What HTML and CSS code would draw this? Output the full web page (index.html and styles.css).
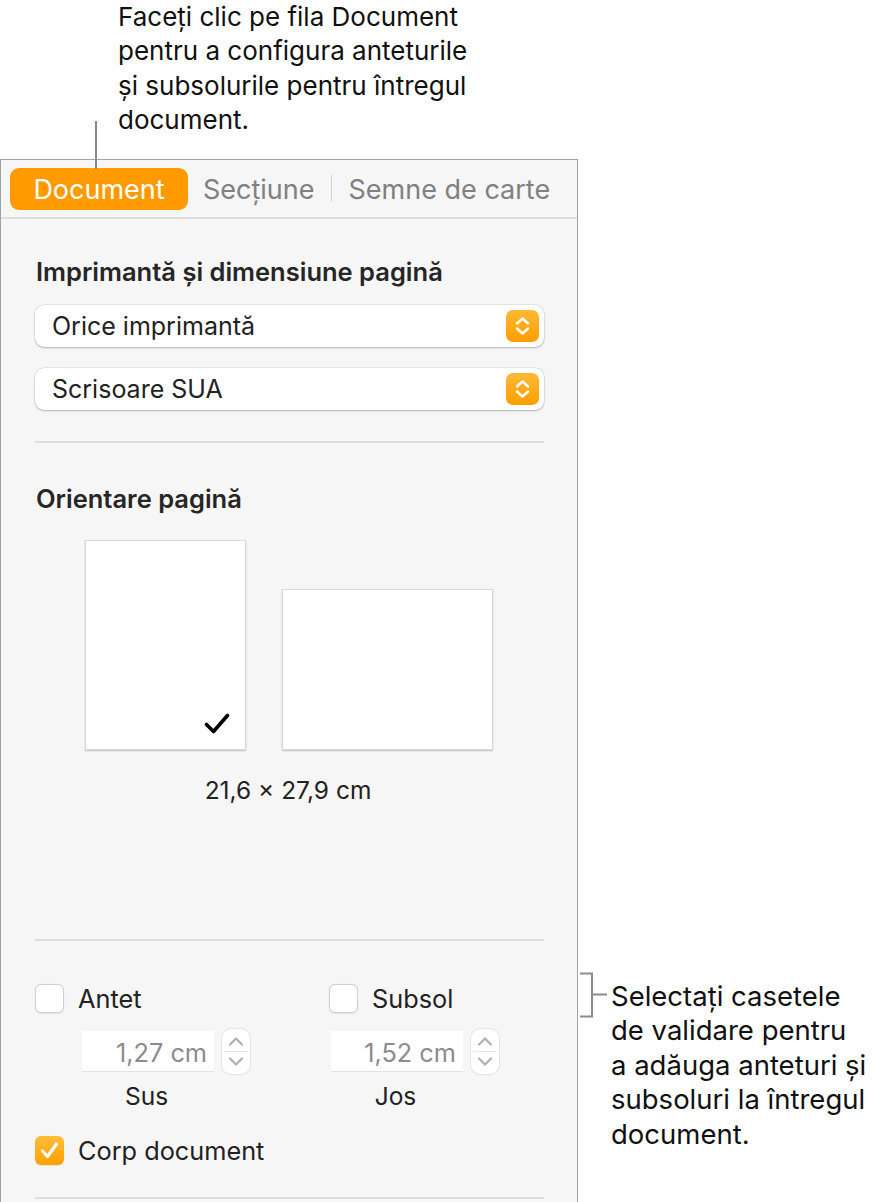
FILE: index.html
```html
<!DOCTYPE html>
<html lang="ro">
<head>
<meta charset="utf-8">
<title>Document</title>
<link rel="stylesheet" href="styles.css">
</head>
<body>
<div class="page">
  <div class="main-col">
    <div class="top-note">
      <p class="note-text">Faceți clic pe fila Document<br>pentru a configura anteturile<br>și subsolurile pentru întregul<br>document.</p>
      <span class="leader"></span>
    </div>
    <div class="inspector">
      <div class="tabs">
        <div class="tab active">Document</div>
        <div class="tab tab-sec">Secțiune</div>
        <span class="tab-sep"></span>
        <div class="tab">Semne de carte</div>
      </div>
      <div class="content">
        <h2 class="heading h-first">Imprimantă și dimensiune pagină</h2>
        <div class="popup">
          <span class="popup-label">Orice imprimantă</span>
          <span class="popup-arrows"><svg width="33" height="32" viewBox="0 0 33 32"><path d="M11 13.5 L16.5 8.5 L22 13.5 M11 18.5 L16.5 23.5 L22 18.5" fill="none" stroke="#fff" stroke-width="2.4" stroke-linecap="round" stroke-linejoin="round"/></svg></span>
        </div>
        <div class="popup popup-second">
          <span class="popup-label">Scrisoare SUA</span>
          <span class="popup-arrows"><svg width="33" height="32" viewBox="0 0 33 32"><path d="M11 13.5 L16.5 8.5 L22 13.5 M11 18.5 L16.5 23.5 L22 18.5" fill="none" stroke="#fff" stroke-width="2.4" stroke-linecap="round" stroke-linejoin="round"/></svg></span>
        </div>
        <div class="sep sep-1"></div>
        <h2 class="heading h-second">Orientare pagină</h2>
        <div class="orient">
          <div class="sheet portrait">
            <svg class="tick" width="26" height="22" viewBox="0 0 26 22"><path d="M2.5 11.5 L9.5 18.5 L23.5 2.5" fill="none" stroke="#000" stroke-width="3.6" stroke-linecap="round" stroke-linejoin="round"/></svg>
          </div>
          <div class="sheet landscape"></div>
        </div>
        <div class="dims">21,6 × 27,9 cm</div>
        <div class="sep sep-2"></div>
        <div class="hf">
          <div class="hf-col hf-left">
            <div class="check"><span class="box"></span><span class="check-label">Antet</span></div>
            <div class="field-row">
              <div class="field">1,27 cm</div>
              <div class="stepper"><svg width="28" height="45" viewBox="0 0 28 45"><path d="M8 15.5 L14 9.5 L20 15.5 M8 29.5 L14 35.5 L20 29.5" fill="none" stroke="#b0b0b0" stroke-width="2.2" stroke-linecap="round" stroke-linejoin="round"/><path d="M2 22.5 H26" stroke="#e6e6e6" stroke-width="1"/></svg></div>
            </div>
            <div class="field-label">Sus</div>
          </div>
          <div class="hf-col hf-right">
            <div class="check"><span class="box"></span><span class="check-label">Subsol</span></div>
            <div class="field-row">
              <div class="field">1,52 cm</div>
              <div class="stepper"><svg width="28" height="45" viewBox="0 0 28 45"><path d="M8 15.5 L14 9.5 L20 15.5 M8 29.5 L14 35.5 L20 29.5" fill="none" stroke="#b0b0b0" stroke-width="2.2" stroke-linecap="round" stroke-linejoin="round"/><path d="M2 22.5 H26" stroke="#e6e6e6" stroke-width="1"/></svg></div>
            </div>
            <div class="field-label">Jos</div>
          </div>
        </div>
        <div class="check check-body"><span class="box checked"><svg width="29" height="29" viewBox="0 0 29 29"><path d="M7.5 15 L12.5 20.5 L21.5 8" fill="none" stroke="#fff" stroke-width="3.2" stroke-linecap="round" stroke-linejoin="round"/></svg></span><span class="check-label">Corp document</span></div>
        <div class="sep sep-3"></div>
      </div>
    </div>
  </div>
  <div class="side-col">
    <div class="side-note">
      <svg class="bracket" width="30" height="46" viewBox="0 0 30 46"><path d="M1 1.5 H13 V44.5 H1 M13 22.5 H28" fill="none" stroke="#8c8c8c" stroke-width="2"/></svg>
      <p class="side-text">Selectați casetele<br>de validare pentru<br>a adăuga anteturi și<br>subsoluri la întregul<br>document.</p>
    </div>
  </div>
</div>
</body>
</html>
```

FILE: styles.css
```css
* { box-sizing: border-box; }
html, body { margin: 0; padding: 0; background: #fff; }
body {
  width: 884px;
  height: 1202px;
  overflow: hidden;
  font-family: "Inter", "Liberation Sans", sans-serif;
  color: #222;
}
.page { display: flex; align-items: flex-start; }
.main-col { width: 578px; flex: none; position: relative; }

.top-note { height: 159px; position: relative; }
.note-text {
  margin: 0;
  padding: 0 0 0 118px;
  font-size: 26px;
  line-height: 34.3px;
  color: #111;
  white-space: nowrap;
}
.leader {
  position: absolute;
  left: 95px;
  top: 121px;
  width: 2px;
  height: 48px;
  background: #8a8a8a;
  z-index: 2;
}

.inspector {
  width: 578px;
  height: 1100px;
  background: #f6f6f6;
  border: 1px solid #a3a3a3;
  border-bottom: none;
}
.tabs {
  height: 59px;
  border-bottom: 2px solid #dedede;
  display: flex;
  align-items: center;
  padding: 0 0 0 9px;
}
.tab {
  font-size: 27px;
  color: #808080;
  height: 42px;
  line-height: 44px;
  white-space: nowrap;
}
.tab.active {
  background: #ff9a00;
  color: #fff;
  border-radius: 9px;
  width: 178px;
  text-align: center;
}
.tab-sec { margin-left: 15px; }
.tab-sep {
  width: 1px;
  height: 27px;
  background: #d2d2d2;
  margin: 0 17px 0 16px;
}

.content { padding: 0 33px 0 34px; }
.heading {
  margin: 0;
  font-size: 25.5px;
  font-weight: 600;
  line-height: 26px;
  color: #262626;
  padding-left: 1px;
  white-space: nowrap;
}
.h-first { padding-top: 40px; }
.h-second { margin-top: 43px; }

.popup {
  margin-top: 20px;
  height: 42px;
  background: #fff;
  border-radius: 9px;
  box-shadow: 0 0 0 0.5px rgba(0,0,0,0.12), 0 1px 2px rgba(0,0,0,0.22);
  display: flex;
  align-items: center;
  justify-content: space-between;
  padding: 0 5px 0 17px;
}
.popup-second { margin-top: 21px; }
.popup-label { font-size: 25px; color: #222; }
.popup-arrows {
  width: 33px;
  height: 32px;
  border-radius: 7px;
  background: linear-gradient(#ffb936, #ff9e00);
  display: flex;
}

.sep { height: 2px; background: #dedede; }
.sep-1 { margin-top: 31px; }

.orient {
  margin-top: 28px;
  display: flex;
  justify-content: center;
  align-items: flex-end;
  gap: 36px;
  padding-right: 1px;
}
.sheet {
  background: #fff;
  border: 1px solid #d9d9d9;
  box-shadow: 0 1px 1.5px rgba(0,0,0,0.22);
  position: relative;
}
.portrait { width: 161px; height: 210px; }
.landscape { width: 211px; height: 161px; }
.tick { position: absolute; left: 118px; top: 172px; }

.dims {
  margin-top: 27px;
  text-align: center;
  font-size: 24.5px;
  line-height: 26px;
  color: #222;
  padding-right: 3px;
}
.sep-2 { margin-top: 136px; }

.hf { display: flex; margin-top: 42px; }
.hf-col { display: flex; flex-direction: column; }
.hf-left { width: 294px; }
.check { display: flex; align-items: center; height: 30px; }
.box {
  width: 29px;
  height: 29px;
  border-radius: 6px;
  background: #fff;
  border: 1px solid #cfcfcf;
  box-shadow: 0 0.5px 1px rgba(0,0,0,0.08);
  display: flex;
  flex: none;
}
.box.checked {
  border: none;
  background: linear-gradient(#ffbc3a, #ffa000);
}
.check-label { margin-left: 14px; font-size: 25.3px; color: #222; white-space: nowrap; }

.field-row { display: flex; align-items: center; margin-top: 16px; }
.hf-left .field-row, .hf-left .field-label { margin-left: 47px; }
.hf-right .field-row, .hf-right .field-label { margin-left: 2px; }
.field {
  width: 132px;
  height: 41px;
  background: #fff;
  border-bottom: 1px solid #e2e2e2;
  text-align: right;
  padding-right: 7px;
  font-size: 25.3px;
  line-height: 43px;
  color: #8c8c8c;
  white-space: nowrap;
}
.stepper {
  margin-left: 8px;
  width: 28px;
  height: 45px;
  background: #fff;
  border-radius: 9px;
  box-shadow: 0 0 0 1px #e4e4e4, 0 1px 1px rgba(0,0,0,0.06);
  display: flex;
}
.field-label {
  width: 132px;
  text-align: center;
  margin-top: 10px;
  font-size: 24.5px;
  line-height: 24px;
  color: #222;
  padding-right: 3px;
}
.check-body { margin-top: 27px; }
.sep-3 { margin-top: 32px; }

.side-col { flex: 1; }
.side-note { padding-top: 972px; display: flex; align-items: flex-start; }
.bracket { margin-left: 1px; flex: none; }
.side-text {
  margin: 7px 0 0 2px;
  font-size: 27.5px;
  line-height: 34.4px;
  color: #111;
  white-space: nowrap;
}
```
